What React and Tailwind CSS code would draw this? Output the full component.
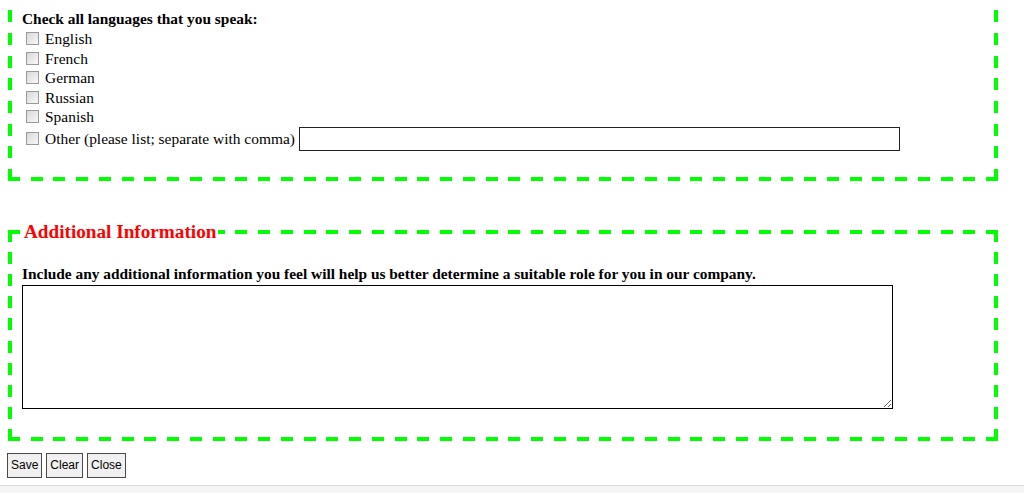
import { useState } from 'react';

const languages = ["English", "French", "German", "Russian", "Spanish"];

// IE-style flat checkbox
const Box = ({ checked, onClick }) => (
  <span
    onClick={onClick}
    className="inline-block w-[13px] h-[13px] border border-[#9a9a9a] bg-gradient-to-br from-[#d8d8d8] to-[#f8f8f8] ml-[4px] mr-[6px] shrink-0 cursor-default"
  >
    {checked && <span className="block w-full h-full text-[10px] leading-[11px] text-center text-black">✓</span>}
  </span>
);

// long lime dashes (12 on / ~11 off) painted under a transparent border, periods tuned so corners close
const base = "border-4 border-transparent bg-origin-border bg-no-repeat [background-size:100%_4px,100%_4px,4px_100%,4px_100%] ";

export default function App() {
  const [checked, setChecked] = useState({});
  const toggle = (k) => setChecked((p) => ({ ...p, [k]: !p[k] }));

  return (
    <div className="h-[493px] overflow-hidden bg-white text-black font-['Liberation_Serif','Times_New_Roman',serif] flex flex-col">
      {/* --- LANGUAGES (scrolled, top cut off) --- */}
      <fieldset
        className={
          "ml-[8px] w-[990px] px-[10px] pt-[6px] pb-[26px] " + base +
          "bg-[linear-gradient(transparent,transparent),repeating-linear-gradient(90deg,#00ff00_0_12px,transparent_12px_22.744px),repeating-linear-gradient(0deg,#00ff00_0_12px,transparent_12px_22.7px),repeating-linear-gradient(0deg,#00ff00_0_12px,transparent_12px_22.7px)] " +
          "[background-position:0_0,0_100%,0_0,100%_0]"
        }
      >
        <div className="text-[15.4px] font-bold leading-[18px]">Check all languages that you speak:</div>
        <div className="mt-[0.7px]">
          {languages.map((l) => (
            <label key={l} className="flex items-center h-[19.6px] text-[15.45px]">
              <Box checked={checked[l]} onClick={() => toggle(l)} />
              {l}
            </label>
          ))}
          <div className="flex items-center h-[24px] text-[15.45px]">
            <Box checked={checked.other} onClick={() => toggle('other')} />
            <span>Other (please list; separate with comma)</span>
            <input type="text" className="ml-[4px] w-[601px] h-[24px] border border-[#222] outline-none px-1" />
          </div>
        </div>
      </fieldset>

      {/* --- ADDITIONAL INFO --- */}
      <fieldset
        className={
          "ml-[8px] mt-[40px] w-[990px] px-[10px] pb-[28px] " + base +
          "bg-[repeating-linear-gradient(90deg,#00ff00_0_12px,transparent_12px_22.744px),repeating-linear-gradient(90deg,#00ff00_0_12px,transparent_12px_22.744px),repeating-linear-gradient(180deg,#00ff00_0_12px,transparent_12px_22.11px),repeating-linear-gradient(180deg,#00ff00_0_12px,transparent_12px_22.11px)] " +
          "[background-position:0_0,0_100%,0_0,100%_0]"
        }
      >
        <legend className="px-[2px] bg-white text-[19.2px] font-bold text-[#ff0000] leading-[22px]">Additional Information</legend>
        <div className="mt-[22px] text-[15.4px] font-bold leading-[18px]">
          Include any additional information you feel will help us better determine a suitable role for you in our company.
        </div>
        <textarea className="block mt-[2px] w-[871px] h-[124px] border border-black bg-white outline-none p-1 text-[14px]" />
      </fieldset>

      {/* --- ACTIONS --- */}
      <div className="flex gap-[4px] ml-[7px] mt-[12px] font-['Liberation_Sans',Arial,sans-serif] text-[12px]">
        <button className="h-[25px] px-[3px] border border-[#4a4a4a] bg-[#f0f0f0]">Save</button>
        <button className="h-[25px] px-[3px] border border-[#4a4a4a] bg-[#f0f0f0]">Clear</button>
        <button className="h-[25px] px-[3px] border border-[#4a4a4a] bg-[#f0f0f0]">Close</button>
      </div>

      <div className="mt-auto h-[8px] border-t border-[#dcdcdc] bg-[#f5f5f5]" />
    </div>
  );
}
